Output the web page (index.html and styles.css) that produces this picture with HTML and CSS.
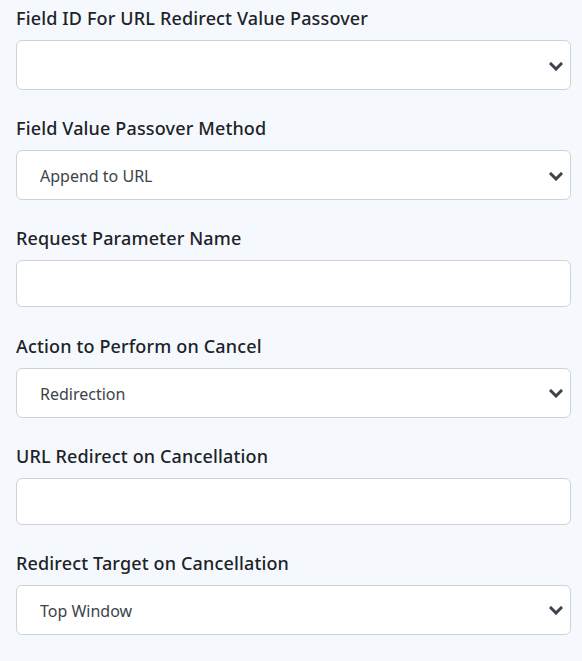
FILE: index.html
```html
<!DOCTYPE html>
<html>
<head>
<meta charset="utf-8">
<link rel="stylesheet" href="styles.css">
</head>
<body>
<div class="form">
  <div class="field">
    <label class="label">Field ID For URL Redirect Value Passover</label>
    <div class="select"><span class="value"></span><svg class="chev" viewBox="0 0 14 9" width="14" height="9"><polyline points="2,2 7,7 12,2" fill="none" stroke="#3c434a" stroke-width="3" stroke-linecap="square"/></svg></div>
  </div>
  <div class="field">
    <label class="label">Field Value Passover Method</label>
    <div class="select"><span class="value">Append to URL</span><svg class="chev" viewBox="0 0 14 9" width="14" height="9"><polyline points="2,2 7,7 12,2" fill="none" stroke="#3c434a" stroke-width="3" stroke-linecap="square"/></svg></div>
  </div>
  <div class="field">
    <label class="label">Request Parameter Name</label>
    <div class="input"></div>
  </div>
  <div class="field">
    <label class="label">Action to Perform on Cancel</label>
    <div class="select"><span class="value">Redirection</span><svg class="chev" viewBox="0 0 14 9" width="14" height="9"><polyline points="2,2 7,7 12,2" fill="none" stroke="#3c434a" stroke-width="3" stroke-linecap="square"/></svg></div>
  </div>
  <div class="field">
    <label class="label">URL Redirect on Cancellation</label>
    <div class="input"></div>
  </div>
  <div class="field">
    <label class="label">Redirect Target on Cancellation</label>
    <div class="select"><span class="value">Top Window</span><svg class="chev" viewBox="0 0 14 9" width="14" height="9"><polyline points="2,2 7,7 12,2" fill="none" stroke="#3c434a" stroke-width="3" stroke-linecap="square"/></svg></div>
  </div>
</div>
</body>
</html>
```
FILE: styles.css
```css
html, body {
  margin: 0;
  padding: 0;
  background: #f5f9fe;
}
body {
  font-family: "Noto Sans", "Open Sans", sans-serif;
  color: #1d2327;
}
.form {
  padding: 6px 11px 0 16px;
  display: flex;
  flex-direction: column;
  gap: 26.2px;
}
.field {
  display: flex;
  flex-direction: column;
}
.label {
  font-size: 18px;
  font-weight: 500;
  letter-spacing: 0.15px;
  line-height: 24px;
  margin-bottom: 10px;
  color: #1d2327;
}
.select, .input {
  box-sizing: border-box;
  background: #fff;
  border: 1px solid #cfd3d8;
  border-radius: 6px;
  display: flex;
  align-items: center;
}
.select {
  height: 50px;
  padding: 2px 7px 0 23px;
  justify-content: space-between;
}
.input {
  height: 47px;
}
.value {
  font-size: 16px;
  color: #3c434a;
}
.chev {
  display: block;
}
```
